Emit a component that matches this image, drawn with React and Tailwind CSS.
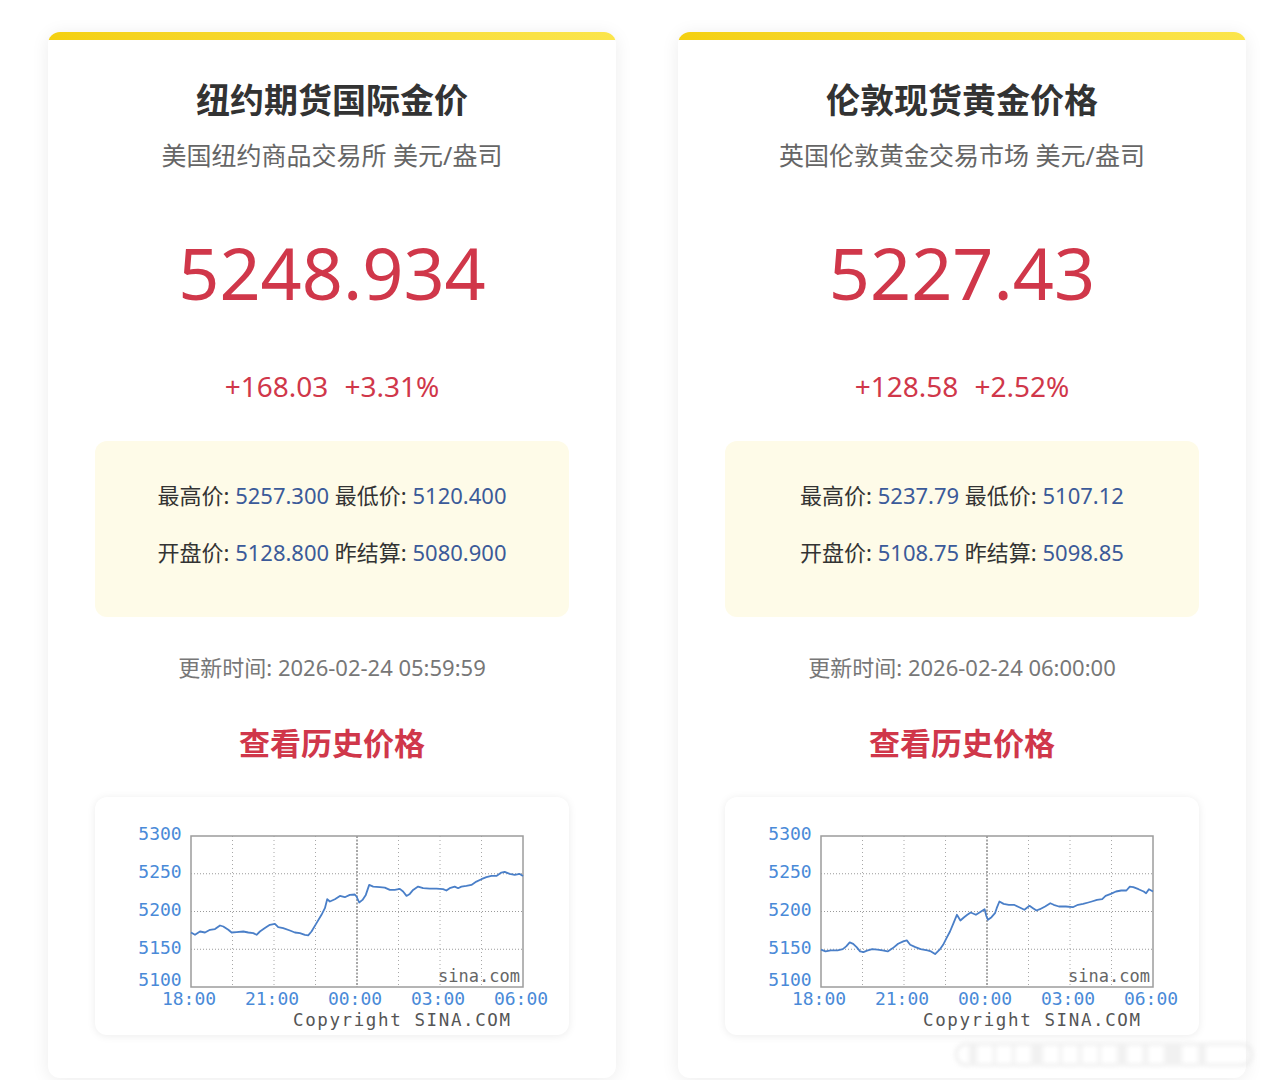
const cards = [
  {
    title: '纽约期货国际金价',
    sub: '美国纽约商品交易所 美元/盎司',
    price: '5248.934',
    change: '+168.03',
    pct: '+3.31%',
    high: '5257.300',
    low: '5120.400',
    open: '5128.800',
    settle: '5080.900',
    time: '2026-02-24 05:59:59',
    bounds: [303, 1300, 138, 592],
    line: [
      [303, 428], [315, 435], [330, 425], [345, 428], [360, 420], [375, 418], [390, 407], [400, 410],
      [415, 420], [425, 428], [440, 427], [460, 425], [475, 428], [490, 430], [500, 435], [510, 425],
      [525, 415], [540, 405], [555, 402], [565, 412], [580, 415], [600, 422], [615, 428], [630, 430],
      [645, 435], [655, 437], [665, 425], [680, 400], [695, 375], [705, 355], [712, 328], [720, 335],
      [735, 328], [750, 318], [765, 322], [780, 315], [795, 314], [800, 320], [808, 338], [818, 330],
      [828, 315], [838, 285], [850, 290], [870, 292], [885, 293], [900, 300], [915, 300], [930, 297],
      [940, 305], [950, 318], [960, 312], [970, 300], [985, 290], [1000, 295], [1020, 296], [1040, 296],
      [1060, 298], [1070, 302], [1080, 295], [1095, 290], [1105, 295], [1115, 290], [1130, 288],
      [1145, 285], [1160, 275], [1175, 268], [1190, 262], [1205, 258], [1220, 258], [1235, 248],
      [1245, 246], [1260, 252], [1275, 255], [1290, 252], [1300, 258],
    ],
  },
  {
    title: '伦敦现货黄金价格',
    sub: '英国伦敦黄金交易市场 美元/盎司',
    price: '5227.43',
    change: '+128.58',
    pct: '+2.52%',
    high: '5237.79',
    low: '5107.12',
    open: '5108.75',
    settle: '5098.85',
    time: '2026-02-24 06:00:00',
    bounds: [292, 1252, 138, 592],
    line: [
      [292, 480], [305, 485], [320, 482], [340, 482], [355, 478], [365, 470], [375, 458], [385, 462],
      [395, 472], [405, 485], [415, 487], [425, 483], [440, 478], [455, 480], [470, 482], [485, 485],
      [500, 475], [515, 462], [530, 455], [540, 452], [550, 465], [565, 472], [580, 478], [600, 482],
      [610, 485], [622, 493], [635, 480], [645, 465], [655, 445], [665, 425], [675, 400], [685, 375],
      [695, 392], [705, 383], [715, 375], [725, 368], [740, 375], [755, 365], [765, 358], [770, 378],
      [775, 390], [785, 382], [795, 370], [800, 355], [808, 335], [820, 342], [835, 345], [850, 345],
      [865, 352], [880, 360], [895, 348], [905, 355], [915, 362], [925, 358], [940, 350], [955, 340],
      [965, 345], [980, 350], [1000, 350], [1020, 352], [1035, 345], [1050, 342], [1065, 338],
      [1075, 335], [1090, 330], [1105, 328], [1115, 318], [1130, 312], [1145, 305], [1160, 302],
      [1175, 302], [1185, 290], [1195, 292], [1210, 298], [1225, 305], [1232, 310], [1240, 298],
      [1252, 305],
    ],
  },
];

// plot box inside the chart panel
const PX = 96, PY = 39, PW = 332, PH = 151;

function Chart({ bounds, line }) {
  const [x0, x1, y0, y1] = bounds;
  const pts = line
    .map(([x, y]) => {
      const px = PX + ((x - x0) / (x1 - x0)) * PW;
      const py = PY + ((y - y0) / (y1 - y0)) * PH;
      return `${px.toFixed(1)},${py.toFixed(1)}`;
    })
    .join(' ');
  const yLabels = [
    ['5300', 43],
    ['5250', 81],
    ['5200', 119],
    ['5150', 157],
    ['5100', 189],
  ];
  const xLabels = ['18:00', '21:00', '00:00', '03:00', '06:00'];
  const mono = { fontFamily: '"DejaVu Sans Mono", "Liberation Mono", monospace' };

  return (
    <svg width="475" height="238" viewBox="0 0 475 238">
      {[1, 2, 3].map((i) => (
        <line
          key={i}
          x1={PX}
          x2={PX + PW}
          y1={PY + (PH / 4) * i}
          y2={PY + (PH / 4) * i}
          stroke="#9a9a9a"
          strokeWidth="1"
          strokeDasharray="1 2"
        />
      ))}
      {[1, 2, 3, 4, 5, 6, 7].map((i) => (
        <line
          key={i}
          x1={PX + (PW / 8) * i}
          x2={PX + (PW / 8) * i}
          y1={PY}
          y2={PY + PH}
          stroke={i === 4 ? '#8a8a8a' : '#a8a8a8'}
          strokeWidth={i === 4 ? 1.5 : 1}
          strokeDasharray={i === 4 ? '2 1.5' : '1 3'}
        />
      ))}
      <rect x={PX} y={PY} width={PW} height={PH} fill="none" stroke="#9c9c9c" strokeWidth="1.5" />
      <text x={PX + PW - 3} y={PY + PH - 5} textAnchor="end" fontSize="17" fill="#666" style={mono}>
        sina.com
      </text>
      <polyline points={pts} fill="none" stroke="#4a7fc8" strokeWidth="1.8" strokeLinejoin="round" />
      {yLabels.map(([t, y]) => (
        <text key={t} x="65" y={y} textAnchor="middle" fontSize="18" fill="#4a8ad8" style={mono}>
          {t}
        </text>
      ))}
      {xLabels.map((t, i) => (
        <text
          key={t}
          x={PX - 2 + (PW / 4) * i}
          y="208"
          textAnchor="middle"
          fontSize="18"
          fill="#4a8ad8"
          style={mono}
        >
          {t}
        </text>
      ))}
      <text
        x="198"
        y="229"
        fontSize="17.5"
        fill="#555"
        textLength="217"
        lengthAdjust="spacing"
        style={mono}
      >
        Copyright  SINA.COM
      </text>
    </svg>
  );
}

function Card({ c }) {
  return (
    <div className="w-[568px] shrink-0 overflow-hidden rounded-xl bg-white shadow-[0_2px_18px_rgba(0,0,0,0.08)]">
      <div className="h-2 bg-gradient-to-r from-[#f4d00f] to-[#fbe54b]" />
      <div className="flex flex-col items-center px-[47px] pb-[43px] text-center">
        <h2 className="mt-[38px] text-[34px] font-bold leading-[44px] text-[#333]">{c.title}</h2>
        <p className="mt-[17px] text-[25px] leading-[32px] text-[#666]">{c.sub}</p>
        <div className="mt-[61px] text-[72px] leading-[80px] text-[#d0374a]">{c.price}</div>
        <div className="mt-[56px] flex gap-4 text-[28px] leading-[36px] text-[#d0374a]">
          <span>{c.change}</span>
          <span>{c.pct}</span>
        </div>
        <div className="mt-[37px] w-full rounded-xl bg-[#fefbe8] pb-[50px] pt-[39px] text-[22px] leading-[30px] text-[#333]">
          <div>
            最高价: <span className="text-[#3b5a99]">{c.high}</span> 最低价:{' '}
            <span className="text-[#3b5a99]">{c.low}</span>
          </div>
          <div className="mt-[27px]">
            开盘价: <span className="text-[#3b5a99]">{c.open}</span> 昨结算:{' '}
            <span className="text-[#3b5a99]">{c.settle}</span>
          </div>
        </div>
        <div className="mt-[35px] text-[22px] leading-[30px] text-[#777]">更新时间: {c.time}</div>
        <a href="#" className="mt-[41px] text-[31px] font-bold leading-[40px] text-[#d0374a]">
          查看历史价格
        </a>
        <div className="mt-[34px] h-[238px] w-full rounded-xl bg-white shadow-[0_1px_8px_rgba(0,0,0,0.08)]">
          <Chart bounds={c.bounds} line={c.line} />
        </div>
      </div>
    </div>
  );
}

export default function App() {
  return (
    <div
      className="relative h-[1080px] overflow-hidden bg-white"
      style={{ fontFamily: '"Noto Sans", "Noto Sans CJK SC", sans-serif' }}
    >
      <div className="flex gap-[62px] pl-[48px] pt-[32px]">
        {cards.map((c) => (
          <Card key={c.title} c={c} />
        ))}
      </div>

      {/* blurred watermark */}
      <div className="absolute left-[955px] top-[1043px] flex h-[23px] w-[298px] items-center gap-[16px] rounded-full border-2 border-[#e8e8e8] px-3 blur-[2px]">
        {[8, 3, 3, 12, 3, 4, 3, 10, 5, 18, 8].map((w, i) => (
          <span key={i} className="h-[22px] bg-[#f1f1f1]" style={{ width: w }} />
        ))}
      </div>
    </div>
  );
}
